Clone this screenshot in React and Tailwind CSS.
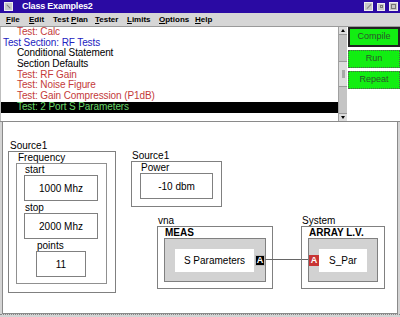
import React from 'react';

const menu = [
  { parts: ['F', 'ile'], w: 'w-[23px]' },
  { parts: ['E', 'dit'], w: 'w-[24px]' },
  { parts: ['Test ', 'P', 'lan'], w: 'w-[42px]' },
  { parts: ['T', 'ester'], w: 'w-[32px]' },
  { parts: ['L', 'imits'], w: 'w-[32px]' },
  { parts: ['O', 'ptions'], w: 'w-[36px]' },
  { parts: ['H', 'elp'], w: 'w-[24px]' },
];

const items = [
  { text: 'Test: Calc', cls: 'pl-[16px] text-[#c43a3a]' },
  { text: 'Test Section: RF Tests', cls: 'pl-[2px] text-[#2222c0]' },
  { text: 'Conditional Statement', cls: 'pl-[16px] text-black' },
  { text: 'Section Defaults', cls: 'pl-[16px] text-black' },
  { text: 'Test: RF Gain', cls: 'pl-[16px] text-[#c43a3a]' },
  { text: 'Test: Noise Figure', cls: 'pl-[16px] text-[#c43a3a]' },
  { text: 'Test: Gain Compression (P1dB)', cls: 'pl-[16px] text-[#c43a3a]' },
  { text: 'Test: 2 Port S Parameters', cls: 'pl-[16px] text-[#6ad86a] bg-black' },
];

function MenuItem({ parts, w }) {
  if (parts.length === 3) {
    return (
      <span className={`${w} whitespace-nowrap`}>
        {parts[0]}
        <span className="underline">{parts[1]}</span>
        {parts[2]}
      </span>
    );
  }
  return (
    <span className={`${w} whitespace-nowrap`}>
      <span className="underline">{parts[0]}</span>
      {parts[1]}
    </span>
  );
}

function Field({ label, value, width, className = '' }) {
  return (
    <div className={`flex flex-col ${className}`}>
      <div className="h-[10px] leading-[10px] pl-[1px]">{label}</div>
      <div className={`${width} h-[26px] border border-[#808080] flex items-center justify-center`}>
        {value}
      </div>
    </div>
  );
}

function Badge({ dark }) {
  return (
    <div
      className={`w-[10px] h-[11px] flex items-center justify-center text-[9px] font-bold text-white leading-none ${
        dark ? 'bg-black border border-[#bbbbbb]' : 'bg-[#c83434]'
      }`}>
      A
    </div>
  );
}

export default function App() {
  return (
    <div className="w-[400px] h-[317px] overflow-hidden bg-[#d4d4d4] font-['Liberation_Sans',Arial,sans-serif] text-[10px] text-black flex flex-col">
      {/* title bar */}
      <div className="h-[13px] bg-[#2a0aa3] flex items-center shrink-0">
        <div className="ml-[4px] w-[9px] h-[9px] bg-[#c8c8c8] border border-[#eeeeee] flex items-center justify-center">
          <div className="w-[5px] h-[1px] bg-[#777] rotate-45"></div>
        </div>
        <div className="ml-[9px] text-white font-bold text-[9px] leading-none tracking-[-0.2px]">Class Examples2</div>
        <div className="ml-auto flex items-center gap-[4px] mr-[2px]">
          <div className="w-[9px] h-[9px] bg-[#c8c8c8] border border-[#eeeeee] flex items-center justify-center">
            <div className="w-[6px] h-[1px] bg-[#888] -rotate-45"></div>
          </div>
          <div className="w-[8px] h-[8px] bg-[#c8c8c8] border border-[#eeeeee] flex items-center justify-center">
            <div className="w-[3px] h-[3px] border border-[#777]"></div>
          </div>
          <div className="w-[9px] h-[9px] bg-[#c8c8c8] border border-[#eeeeee] flex items-center justify-center">
            <div className="w-[5px] h-[5px] border border-[#777]"></div>
          </div>
        </div>
      </div>

      {/* menu bar */}
      <div className="h-[14px] bg-[#d6d6d6] border-b border-[#9a9a9a] flex items-center shrink-0 font-bold text-[8px] leading-none">
        <div className="flex pl-[6px]">
          {menu.map((m, i) => (
            <MenuItem key={i} parts={m.parts} w={m.w} />
          ))}
        </div>
      </div>

      {/* top section */}
      <div className="h-[94px] flex shrink-0 bg-white">
        <div className="w-[338px] flex flex-col border-l border-[#bdbdbd]">
          {items.map((it) => (
            <div key={it.text} className={`h-[10.7px] leading-[10.7px] whitespace-nowrap tracking-[-0.1px] ${it.cls}`}>
              {it.text}
            </div>
          ))}
        </div>
        <div className="w-[9px] flex flex-col bg-[#c4c4c4] border-l border-[#a0a0a0]">
          <div className="h-[8px] bg-[#dcdcdc] border-b border-[#999] flex items-center justify-center">
            <div className="w-0 h-0 border-l-[2px] border-r-[2px] border-b-[3px] border-l-transparent border-r-transparent border-b-black"></div>
          </div>
          <div className="h-[26px] bg-[#c4c4c4]"></div>
          <div className="h-[26px] bg-[#dcdcdc] border-y border-[#999] flex items-center justify-center">
            <div className="w-[3px] h-[8px] bg-[#a8a8a8]"></div>
          </div>
          <div className="flex-1 bg-[#c4c4c4]"></div>
          <div className="h-[8px] bg-[#dcdcdc] border-t border-[#999] flex items-center justify-center">
            <div className="w-0 h-0 border-l-[2px] border-r-[2px] border-t-[3px] border-l-transparent border-r-transparent border-t-black"></div>
          </div>
        </div>
        <div className="flex-1 flex flex-col gap-[3px] pl-[1px] text-[9px] text-[#2c542c]">
          <div className="h-[20px] bg-[#12ee12] border-2 border-[#222] flex items-center justify-center">Compile</div>
          <div className="h-[18px] bg-[#12ee12] border border-dotted border-[#555] flex items-center justify-center">Run</div>
          <div className="h-[18px] bg-[#12ee12] border border-dotted border-[#555] flex items-center justify-center">Repeat</div>
        </div>
      </div>

      {/* canvas */}
      <div className="flex-1 flex flex-col border-t border-[#8a8a8a]">
        <div className="flex-1 ml-[2px] mr-[2px] border-l border-r border-b border-[#8a8a8a] bg-white relative">
          {/* Source1 frequency */}
          <div className="absolute left-[5px] top-[19px] flex flex-col">
            <div className="h-[10px] leading-[10px] pl-[2px]">Source1</div>
            <div className="w-[108px] h-[142px] border border-[#808080] pl-[7px] pt-[1px]">
              <div className="h-[10px] leading-[10px] pl-[2px]">Frequency</div>
              <div className="w-[91px] h-[121px] border border-[#909090] pl-[7px] pt-[1px]">
                <Field label="start" value="1000 Mhz" width="w-[74px]" />
                <Field label="stop" value="2000 Mhz" width="w-[74px]" className="mt-[2px]" />
                <Field label="points" value="11" width="w-[50px]" className="mt-[2px] ml-[12px]" />
              </div>
            </div>
          </div>

          {/* Source1 power */}
          <div className="absolute left-[128px] top-[29px] flex flex-col">
            <div className="h-[10px] leading-[10px] pl-[1px]">Source1</div>
            <div className="w-[91px] h-[46px] border border-[#808080] pl-[8px] pt-[1px]">
              <Field label="Power" value="-10  dbm" width="w-[73px]" />
            </div>
          </div>

          {/* vna */}
          <div className="absolute left-[154px] top-[94px] flex flex-col">
            <div className="h-[10px] leading-[10px] pl-[1px]">vna</div>
            <div className="w-[116px] h-[63px] border border-[#808080] pl-[6px] pt-[1px]">
              <div className="h-[10px] leading-[10px] pl-[1px] font-bold">MEAS</div>
              <div className="w-[102px] h-[44px] bg-[#d2d2d2] border border-[#808080] flex items-center pl-[10px]">
                <div className="w-[79px] h-[23px] bg-white flex items-center justify-center">S Parameters</div>
                <div className="ml-[1px]">
                  <Badge dark />
                </div>
              </div>
            </div>
          </div>

          {/* connector */}
          <div className="absolute left-[262px] top-[137px] w-[44px] h-[1px] bg-[#666]"></div>

          {/* System */}
          <div className="absolute left-[298px] top-[94px] flex flex-col">
            <div className="h-[10px] leading-[10px] pl-[1px]">System</div>
            <div className="w-[84px] h-[63px] border border-[#808080] pl-[6px] pt-[1px]">
              <div className="h-[10px] leading-[10px] pl-[1px] font-bold">ARRAY L.V.</div>
              <div className="w-[70px] h-[44px] bg-[#d2d2d2] border border-[#808080] flex items-center">
                <Badge />
                <div className="w-[48px] h-[23px] bg-white flex items-center justify-center">S_Par</div>
              </div>
            </div>
          </div>
        </div>
        <div className="h-[3px] border-t border-dotted border-[#888] bg-[#d4d4d4]"></div>
      </div>
    </div>
  );
}
